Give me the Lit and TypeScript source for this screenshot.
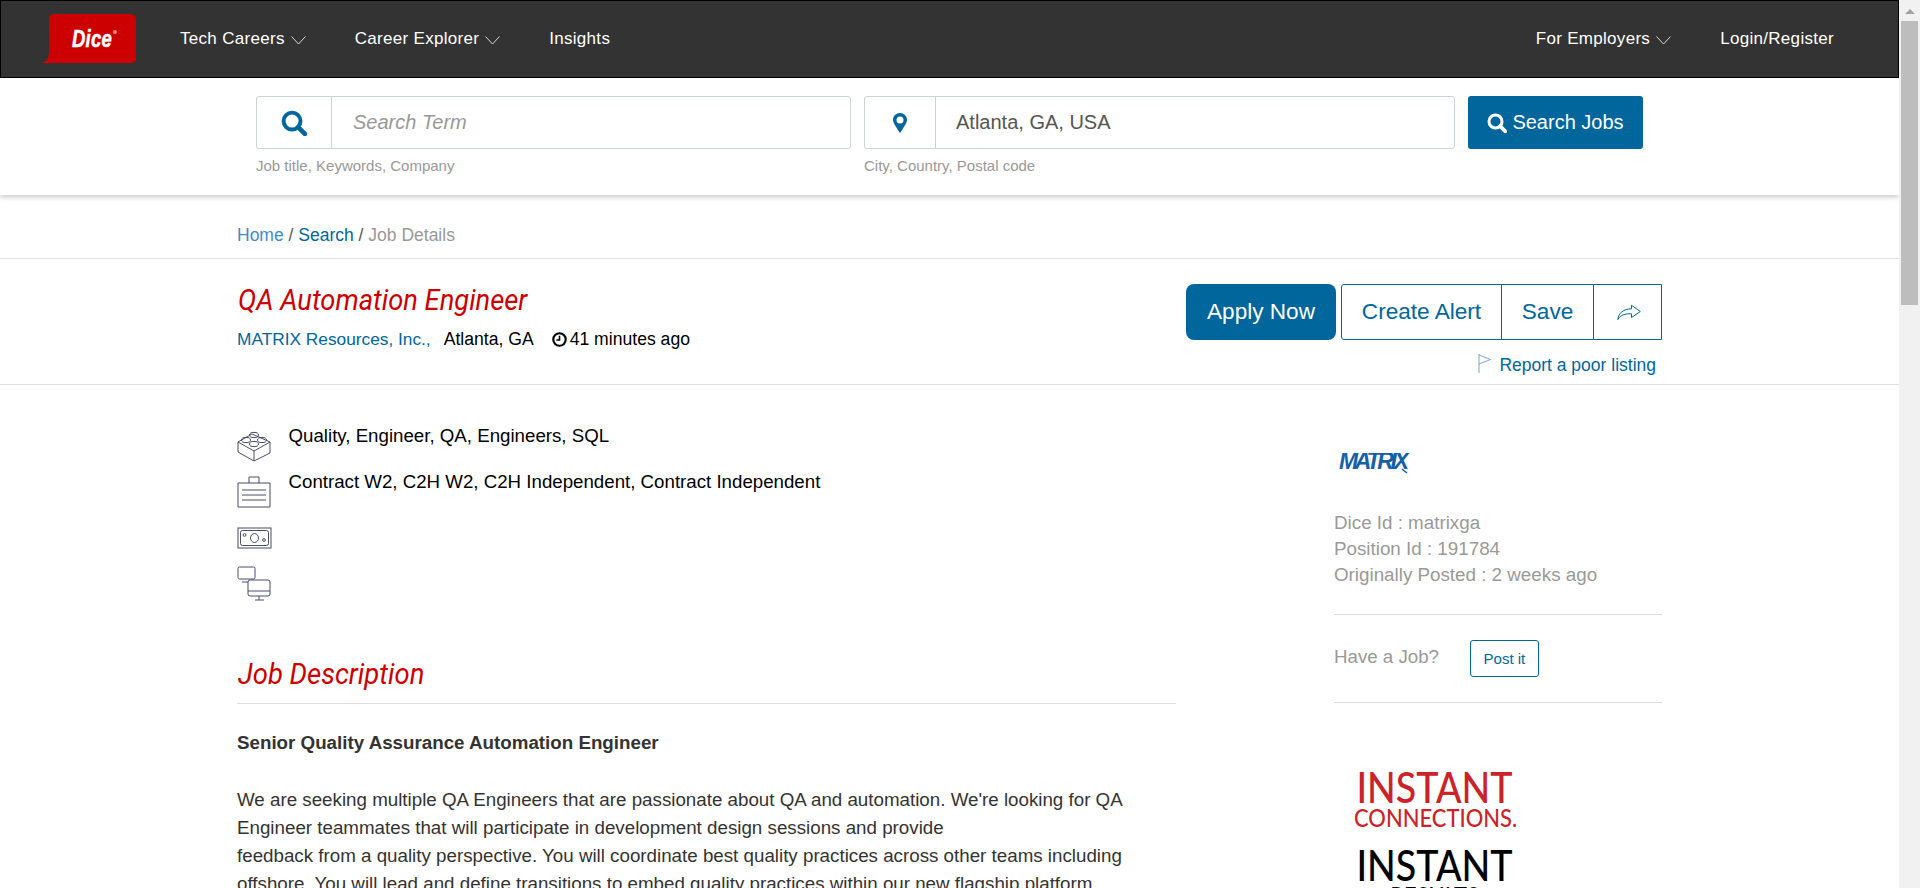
import { LitElement, html, css, svg } from 'lit';
import { customElement } from 'lit/decorators.js';

const searchIcon = (size: number, color: string) => html`
  <svg width=${size} height=${size} viewBox="0 0 24 24" fill="none" stroke=${color} stroke-width="3.6">
    <circle cx="10.2" cy="10.2" r="7.8"></circle>
    <path d="M15.8 15.8 L22 22" stroke-width="4.4" stroke-linecap="round"></path>
  </svg>`;

const chevron = html`
  <svg class="chev" width="15" height="9" viewBox="0 0 15 9" fill="none" stroke="#d8d8d8" stroke-width="1">
    <path d="M0.5 0.5 L7.5 8 L14.5 0.5"></path>
  </svg>`;

const lego = svg`
  <path d="M1 12 L15 4 L33 12 L17 21 Z M1 12 V22 L17 31 V21 M17 31 L33 23 V12" />
  <ellipse cx="17" cy="5" rx="4.5" ry="2.6" />
  <ellipse cx="9" cy="10" rx="4.5" ry="2.6" />
  <ellipse cx="25" cy="10" rx="4.5" ry="2.6" />
  <ellipse cx="17" cy="14" rx="4.5" ry="2.6" />`;

const briefcase = svg`
  <path d="M1 7 H33 V31 H1 Z" />
  <path d="M12 7 V1 H22 V7" />
  <path d="M5 14 H29 M5 19 H29 M5 24 H29" />`;

const money = svg`
  <rect x="1" y="1" width="33" height="20" />
  <rect x="3.5" y="3.5" width="28" height="15" rx="2" />
  <ellipse cx="17.5" cy="11" rx="4" ry="4.5" />
  <circle cx="7.5" cy="8" r="1.4" />
  <circle cx="27" cy="13" r="1.4" />`;

const screens = svg`
  <rect x="1" y="1" width="17" height="12" rx="1.5" />
  <path d="M5 16 H11" />
  <rect x="11" y="14" width="22" height="16" rx="2" />
  <path d="M11 25 H33 M18 34 H27 M22 30 V34" />`;

@customElement('app-root')
export class AppRoot extends LitElement {
  static styles = css`
    :host {
      display: flex;
      height: 888px;
      overflow: hidden;
      font-family: 'Liberation Sans', Arial, sans-serif;
      color: #333;
      background: #fff;
    }
    .page {
      flex: 1;
      min-width: 0;
      height: 888px;
      overflow: hidden;
    }
    .scrollbar {
      width: 21px;
      flex: none;
      background: #f1f1f1;
      padding: 9px 2px 0;
      box-sizing: border-box;
    }
    .scrollbar .up {
      width: 0;
      height: 0;
      margin: 0 auto 7px;
      border-left: 5px solid transparent;
      border-right: 5px solid transparent;
      border-bottom: 5px solid #a3a3a3;
    }
    .scrollbar .thumb {
      height: 284px;
      background: #bdbdbd;
    }
    a { text-decoration: none; color: inherit; }

    /* top bar */
    .nav {
      height: 78px;
      box-sizing: border-box;
      background: #333;
      border: 1px solid #000;
      display: flex;
      align-items: center;
      padding: 0 64px 0 41px;
      color: #fff;
      font-size: 17px;
      letter-spacing: 0.3px;
    }
    .logo { display: block; margin-right: 44px; }
    .nav a { display: flex; align-items: center; }
    .chev { margin-left: 6px; margin-top: 2px; }
    .nav .links { display: flex; gap: 49px; }
    .nav .right { margin-left: auto; display: flex; gap: 49px; }

    /* search band */
    .search {
      height: 117px;
      box-sizing: border-box;
      padding: 18px 0 0 256px;
      display: flex;
      box-shadow: 0 2px 5px rgba(0, 0, 0, 0.22);
      position: relative;
    }
    .field { display: flex; flex-direction: column; margin-right: 13px; }
    .box {
      display: flex;
      height: 53px;
      box-sizing: border-box;
      border: 1px solid #ccd2da;
      border-radius: 3px;
      font-size: 20px;
      line-height: 51px;
    }
    .addon {
      display: flex;
      align-items: center;
      justify-content: center;
      border-right: 1px solid #ccd2da;
    }
    .field.one .box { width: 595px; }
    .field.one .addon { width: 74px; }
    .field.one .val { padding-left: 21px; font-style: italic; color: #999; }
    .field.two .box { width: 591px; }
    .field.two .addon { width: 70px; }
    .field.two .val { padding-left: 20px; color: #555; }
    .hint { font-size: 15px; color: #999; margin-top: 8px; line-height: 17px; }
    .searchbtn {
      width: 175px;
      height: 53px;
      background: #00669c;
      color: #fff;
      border-radius: 3px;
      display: flex;
      align-items: center;
      justify-content: center;
      gap: 5px;
      font-size: 20px;
    }

    /* breadcrumb */
    .crumb {
      height: 64px;
      box-sizing: border-box;
      border-bottom: 1px solid #e0e0e0;
      padding: 29px 0 0 237px;
      font-size: 17.5px;
      line-height: 22px;
      color: #555;
    }
    .crumb .home { color: #428bca; }
    .crumb .srch { color: #00669c; }
    .crumb .cur { color: #999; }

    /* job header */
    .jobhead {
      height: 126px;
      box-sizing: border-box;
      border-bottom: 1px solid #e0e0e0;
      padding: 25px 237px 0 237px;
      display: flex;
      justify-content: space-between;
    }
    .title {
      display: inline-block;
      font-family: Roboto, sans-serif;
      font-style: italic;
      font-weight: 400;
      color: #c00;
      font-size: 30px;
      line-height: 34px;
      margin: -1px 0 0 1px;
      transform: scaleX(0.91);
      transform-origin: left;
      white-space: nowrap;
    }
    .meta {
      display: flex;
      align-items: center;
      font-size: 17.6px;
      color: #000;
      margin-top: 12px;
      line-height: 20px;
    }
    .meta .co { color: #00669c; margin-right: 13px; font-size: 17.3px; }
    .meta .loc { margin-right: 18px; }
    .meta svg { margin-right: 3px; }
    .actions { display: flex; flex-direction: column; align-items: flex-end; }
    .btns { display: flex; }
    .apply {
      width: 150px;
      height: 56px;
      background: #00669c;
      color: #fff;
      border-radius: 8px;
      font-size: 22.6px;
      display: flex;
      align-items: center;
      justify-content: center;
      margin-right: 5px;
    }
    .group {
      display: flex;
      height: 56px;
      box-sizing: border-box;
      border: 1px solid #00669c;
      border-radius: 3px 0 0 3px;
      color: #00669c;
      font-size: 22.6px;
    }
    .group a {
      display: flex;
      align-items: center;
      justify-content: center;
      border-left: 1px solid #00669c;
    }
    .group a:first-child { border-left: none; width: 159px; }
    .group a:nth-child(2) { width: 91px; }
    .group a:nth-child(3) { width: 67px; }
    .group svg { margin-left: 3px; }
    .report {
      display: flex;
      align-items: center;
      color: #00669c;
      font-size: 17.5px;
      margin-top: 15px;
      margin-right: 6px;
      line-height: 20px;
    }
    .report svg { margin-right: 8px; margin-top: -4px; }

    /* body */
    .body {
      display: flex;
      justify-content: space-between;
      padding: 0 237px;
    }
    .left { width: 939px; }
    .right-col { width: 328px; }
    .tags { padding-top: 45px; }
    .tag { display: flex; align-items: flex-start; font-size: 18.7px; color: #000; }
    .tag svg { display: block; fill: none; stroke: #4b4a68; stroke-width: 1; }
    .tag .ico { width: 51.5px; flex: none; }
    .tag span { line-height: 20px; margin-top: -4px; }
    .tag.a { height: 46px; }
    .tag.b { height: 51px; }
    .tag.c { height: 39px; }
    .tag.d { height: 36px; }
    h2 {
      margin: 46px 0 0;
      height: 56px;
      box-sizing: border-box;
      border-bottom: 1px solid #ddd;
      padding: 9px 0 0 1px;
      color: #c00;
    }
    h2 span {
      display: inline-block;
      font-family: Roboto, sans-serif;
      font-weight: 400;
      font-style: italic;
      font-size: 30px;
      line-height: 34px;
      transform: scaleX(0.915);
      transform-origin: left;
    }
    .desc { font-size: 18.75px; line-height: 28px; color: #333; margin-top: 25px; }
    .desc b { display: block; margin-bottom: 29px; }

    .mlogo { display: block; margin: 68px 0 0 4px; }
    .facts { margin-top: 33px; font-size: 18.8px; line-height: 26px; color: #999; padding-bottom: 26px; border-bottom: 1px solid #ddd; }
    .havejob {
      height: 88px;
      box-sizing: border-box;
      border-bottom: 1px solid #ddd;
      display: flex;
      align-items: center;
      font-size: 18.7px;
      color: #999;
    }
    .havejob span { margin-top: -4px; }
    .post {
      margin-left: 31px;
      width: 69px;
      height: 37px;
      box-sizing: border-box;
      border: 1px solid #00669c;
      border-radius: 3px;
      color: #00669c;
      font-size: 15px;
      display: flex;
      align-items: center;
      justify-content: center;
    }
    .banner {
      margin-left: 20px;
      padding-top: 65px;
      font-family: Lato, sans-serif;
      font-weight: 500;
      text-align: center;
      width: 180px;
      transform: scaleX(0.895);
      transform-origin: left;
    }
    .banner .big { font-size: 42px; line-height: 38px; color: #cc2229; }
    .banner .small { font-size: 24.5px; line-height: 26px; color: #cc2229; margin-top: -1px; }
    .banner .big.k { color: #000; margin-top: 15px; }
    .banner .small.k { color: #000; margin-top: -1px; }
  `;

  render() {
    return html`
      <div class="page">
        <header class="nav">
          <a class="logo" href="#">
            <svg width="94" height="50" viewBox="0 0 94 50">
              <path d="M12 0 H88 Q94 0 94 6 V44 Q94 49 88 49 H0 Q7 47 7 38 V5 Q7 0 12 0 Z" fill="#c00"></path>
              <text x="30" y="33" font-family="Liberation Sans" font-weight="700" font-style="italic" font-size="23" fill="#fff" stroke="#fff" stroke-width="0.5" textLength="40" lengthAdjust="spacingAndGlyphs">Dice</text>
              <circle cx="73" cy="18" r="2" fill="#e88"></circle>
            </svg>
          </a>
          <div class="links">
            <a href="#">Tech Careers ${chevron}</a>
            <a href="#">Career Explorer ${chevron}</a>
            <a href="#">Insights</a>
          </div>
          <div class="right">
            <a href="#">For Employers ${chevron}</a>
            <a href="#">Login/Register</a>
          </div>
        </header>

        <section class="search">
          <div class="field one">
            <div class="box">
              <div class="addon">${searchIcon(26, '#00669c')}</div>
              <div class="val">Search Term</div>
            </div>
            <div class="hint">Job title, Keywords, Company</div>
          </div>
          <div class="field two">
            <div class="box">
              <div class="addon">
                <svg width="14" height="20" viewBox="0 0 14 20">
                  <path fill="#00669c" fill-rule="evenodd" d="M7 0 C3 0 0 3 0 7 C0 10 5 17 7 20 C9 17 14 10 14 7 C14 3 11 0 7 0 Z M7 3.5 A3.5 3.5 0 1 1 7 10.5 A3.5 3.5 0 1 1 7 3.5 Z"></path>
                </svg>
              </div>
              <div class="val">Atlanta, GA, USA</div>
            </div>
            <div class="hint">City, Country, Postal code</div>
          </div>
          <a class="searchbtn" href="#">${searchIcon(20, '#fff')}Search Jobs</a>
        </section>

        <nav class="crumb">
          <a class="home" href="#">Home</a> / <a class="srch" href="#">Search</a> / <span class="cur">Job Details</span>
        </nav>

        <section class="jobhead">
          <div>
            <h1 class="title">QA Automation Engineer</h1>
            <div class="meta">
              <a class="co" href="#">MATRIX Resources, Inc.,</a>
              <span class="loc">Atlanta, GA</span>
              <svg width="15" height="15" viewBox="0 0 14 14" fill="none" stroke="#000">
                <circle cx="7" cy="7" r="5.8" stroke-width="2"></circle>
                <path d="M7 3.5 V7.5 H4" stroke-width="1.5"></path>
              </svg>
              <span>41 minutes ago</span>
            </div>
          </div>
          <div class="actions">
            <div class="btns">
              <a class="apply" href="#">Apply Now</a>
              <div class="group">
                <a href="#">Create Alert</a>
                <a href="#">Save</a>
                <a href="#">
                  <svg width="24" height="17" viewBox="0 0 24 16" fill="none" stroke="#00669c" stroke-width="1">
                    <path d="M14.5 0.8 L23.3 7 L14.5 13 V9.3 C8 9 3.5 10.5 0.8 15 C1.5 8.5 6.5 4.5 14.5 4.3 Z"></path>
                  </svg>
                </a>
              </div>
            </div>
            <a class="report" href="#">
              <svg width="13" height="19" viewBox="0 0 13 19" fill="none" stroke="#7ba3cc" stroke-width="1">
                <path d="M1 0 V19 M1 1 L12.5 5.5 L1 10"></path>
              </svg>
              Report a poor listing
            </a>
          </div>
        </section>

        <section class="body">
          <div class="left">
            <div class="tags">
              <div class="tag a">
                <div class="ico"><svg width="34" height="32" viewBox="0 0 34 32">${lego}</svg></div>
                <span>Quality, Engineer, QA, Engineers, SQL</span>
              </div>
              <div class="tag b">
                <div class="ico"><svg width="34" height="32" viewBox="0 0 34 32">${briefcase}</svg></div>
                <span>Contract W2, C2H W2, C2H Independent, Contract Independent</span>
              </div>
              <div class="tag c">
                <div class="ico"><svg width="35" height="22" viewBox="0 0 35 22">${money}</svg></div>
              </div>
              <div class="tag d">
                <div class="ico"><svg width="34" height="35" viewBox="0 0 34 35">${screens}</svg></div>
              </div>
            </div>
            <h2><span>Job Description</span></h2>
            <div class="desc">
              <b>Senior Quality Assurance Automation Engineer</b>
              We are seeking multiple QA Engineers that are passionate about QA and automation. We're looking for QA<br />
              Engineer teammates that will participate in development design sessions and provide<br />
              feedback from a quality perspective. You will coordinate best quality practices across other teams including<br />
              offshore. You will lead and define transitions to embed quality practices within our new flagship platform.
            </div>
          </div>
          <aside class="right-col">
            <svg class="mlogo" width="78" height="24" viewBox="0 0 78 24">
              <text x="1" y="16" font-family="Liberation Sans" font-weight="700" font-style="italic" font-size="23" fill="#1560a8" textLength="70" lengthAdjust="spacing">MATRIX</text>
              <path d="M64 16 L69 20" stroke="#1560a8" stroke-width="1.6"></path>
            </svg>
            <div class="facts">
              <div>Dice Id : matrixga</div>
              <div>Position Id : 191784</div>
              <div>Originally Posted : 2 weeks ago</div>
            </div>
            <div class="havejob">
              <span>Have a Job?</span>
              <a class="post" href="#">Post it</a>
            </div>
            <div class="banner">
              <div class="big">INSTANT</div>
              <div class="small">CONNECTIONS.</div>
              <div class="big k">INSTANT</div>
              <div class="small k">RESULTS</div>
            </div>
          </aside>
        </section>
      </div>
      <div class="scrollbar"><div class="up"></div><div class="thumb"></div></div>
    `;
  }
}
